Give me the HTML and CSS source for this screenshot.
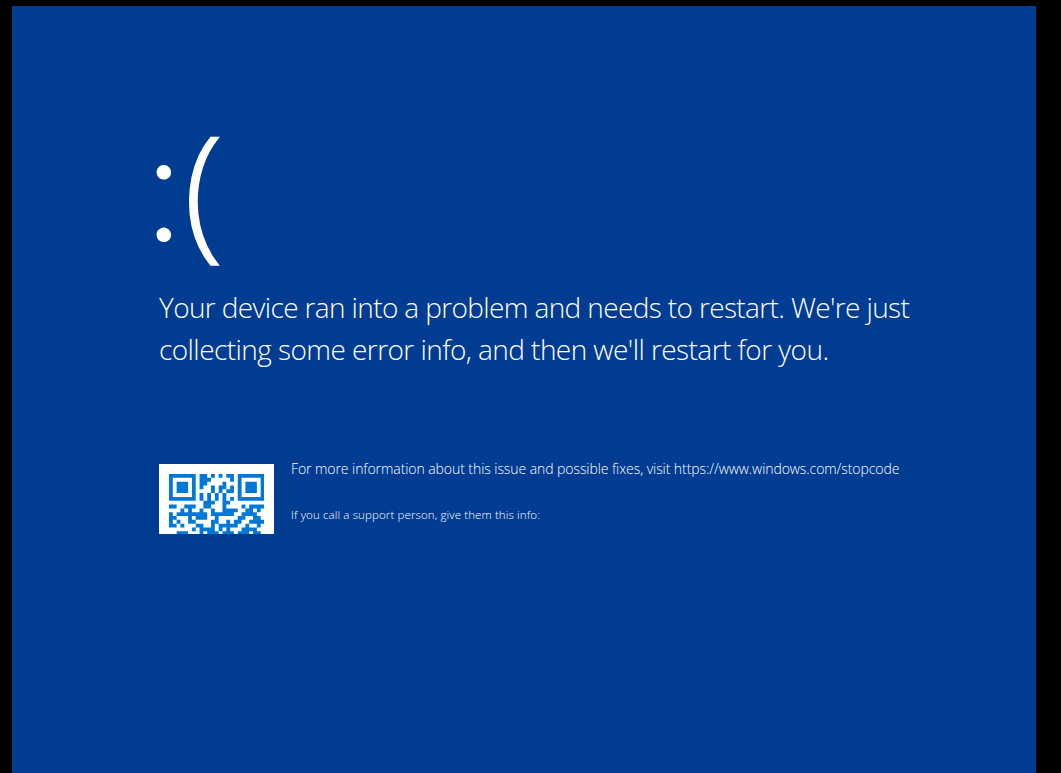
FILE: index.html
```
<!DOCTYPE html>
<html>
  <head>
    <title>Stop error</title>
    <link rel="stylesheet" href="styles.css">
  </head>
  <body>
    <div class="screen">
      <h1 class="face"><span class="eyes">:</span><span class="mouth">(</span></h1>
      <p class="message">Your device ran into a problem and needs to restart. We're just<br><span class="second">collecting some error info, and then we'll restart for you.</span></p>
      <div class="details">
        <div class="qr">
          <svg viewBox="0 0 25 25"><path id="code" d=""/></svg>
        </div>
        <div class="info">
          <p class="more">For more information about this issue and possible fixes, visit https://www.windows.com/stopcode</p>
          <p class="support">If you call a support person, give them this info:</p>
        </div>
      </div>
    </div>
    <script src="qr.js"></script>
  </body>
</html>
```
FILE: styles.css
```
body {
  margin: 0;
  background-color: #000;
  font-family: "Open Sans", "Noto Sans", sans-serif;
  font-weight: 300;
  color: #fff;
}

.screen {
  box-sizing: border-box;
  width: 1024px;
  height: 767px;
  margin: 6px 0 0 12px;
  padding: 93px 0 0 147px;
  background-color: #003c91;
  overflow: hidden;
}

.face {
  display: flex;
  margin: 0 0 0 -14px;
  height: 187px;
  line-height: 173px;
}

.eyes {
  margin-top: -5px;
  font-family: Lato, sans-serif;
  font-size: 157px;
  font-weight: 300;
}

.mouth {
  margin-left: 1px;
  font-size: 145px;
  font-weight: 300;
  -webkit-text-stroke: 1.4px #fff;
}

.message {
  margin: 0;
  font-size: 28px;
  line-height: 42px;
  letter-spacing: -0.63px;
  white-space: nowrap;
}

.message .second {
  letter-spacing: -0.56px;
}

.details {
  display: flex;
  gap: 17px;
  margin-top: 94px;
}

.qr {
  box-sizing: border-box;
  width: 115px;
  height: 70px;
  padding: 9.5px 0 0 9.5px;
  background-color: #fff;
  overflow: hidden;
}

.qr svg {
  display: block;
  width: 95.5px;
  height: 95.5px;
  fill: #0078d7;
}

.info p {
  margin: 0;
  white-space: nowrap;
}

.info .more {
  font-size: 14px;
  line-height: 20px;
  margin-top: -5px;
  letter-spacing: -0.07px;
}

.info .support {
  font-size: 11.5px;
  line-height: 16px;
  margin-top: 28px;
  letter-spacing: 0.12px;
}
```
FILE: qr.js
```
// version 2 code, level L, mask 4
const text = "https://www.windows.com/stopcode";
const size = 25;
const format = "110011000101111";

function multiply(a, b) {
  let result = 0;
  for (; b; b >>= 1) {
    if (b & 1) result ^= a;
    a <<= 1;
    if (a & 256) a ^= 0x11d;
  }
  return result;
}

function getBits() {
  let bits = "0100" + text.length.toString(2).padStart(8, "0");
  for (const c of text) bits += c.charCodeAt(0).toString(2).padStart(8, "0");
  bits += "0000";
  const data = bits.match(/.{8}/g).map(b => parseInt(b, 2));

  // generator polynomial, leading 1 first
  let generator = [1];
  let root = 1;
  for (let i = 0; i < 10; i++) {
    const next = [...generator, 0];
    generator.forEach((g, j) => {
      next[j + 1] ^= multiply(g, root);
    });
    generator = next;
    root = multiply(root, 2);
  }

  const rest = [...data, ...Array(10).fill(0)];
  for (let i = 0; i < data.length; i++) {
    const factor = rest[i];
    generator.forEach((g, j) => {
      rest[i + j] ^= multiply(g, factor);
    });
  }
  return [...data, ...rest.slice(data.length)]
    .map(b => b.toString(2).padStart(8, "0")).join("");
}

const grid = Array.from({ length: size }, () => Array(size).fill(null));

function square(cx, cy, radius, light) {
  for (let y = -radius; y <= radius; y++) {
    for (let x = -radius; x <= radius; x++) {
      if (grid[cy + y] && grid[cy + y][cx + x] !== undefined) {
        const ring = Math.max(Math.abs(x), Math.abs(y));
        grid[cy + y][cx + x] = light.includes(ring) ? 0 : 1;
      }
    }
  }
}

for (let i = 0; i < size; i++) {
  grid[6][i] = grid[i][6] = 1 - i % 2;
}
square(3, 3, 4, [2, 4]);
square(21, 3, 4, [2, 4]);
square(3, 21, 4, [2, 4]);
square(18, 18, 2, [1]);

for (let i = 0; i < 15; i++) {
  const bit = Number(format[i]);
  if (i < 6) grid[8][i] = bit;
  else if (i === 6) grid[8][7] = bit;
  else if (i === 7) grid[8][8] = bit;
  else if (i === 8) grid[7][8] = bit;
  else grid[14 - i][8] = bit;

  if (i < 7) grid[24 - i][8] = bit;
  else grid[8][10 + i] = bit;
}
grid[17][8] = 1;

const bits = getBits();
let index = 0;
let up = true;
for (let right = 24; right > 0; right -= 2) {
  if (right === 6) right = 5;
  for (let i = 0; i < size; i++) {
    const y = up ? size - 1 - i : i;
    for (const x of [right, right - 1]) {
      if (grid[y][x] === null) {
        const mask = (Math.floor(y / 2) + Math.floor(x / 3)) % 2 === 0 ? 1 : 0;
        grid[y][x] = Number(bits[index++] || 0) ^ mask;
      }
    }
  }
  up = !up;
}

let path = "";
grid.forEach((row, y) => {
  row.forEach((cell, x) => {
    if (cell) path += `M${x} ${y}h1v1h-1z`;
  });
});
document.getElementById("code").setAttribute("d", path);
```
